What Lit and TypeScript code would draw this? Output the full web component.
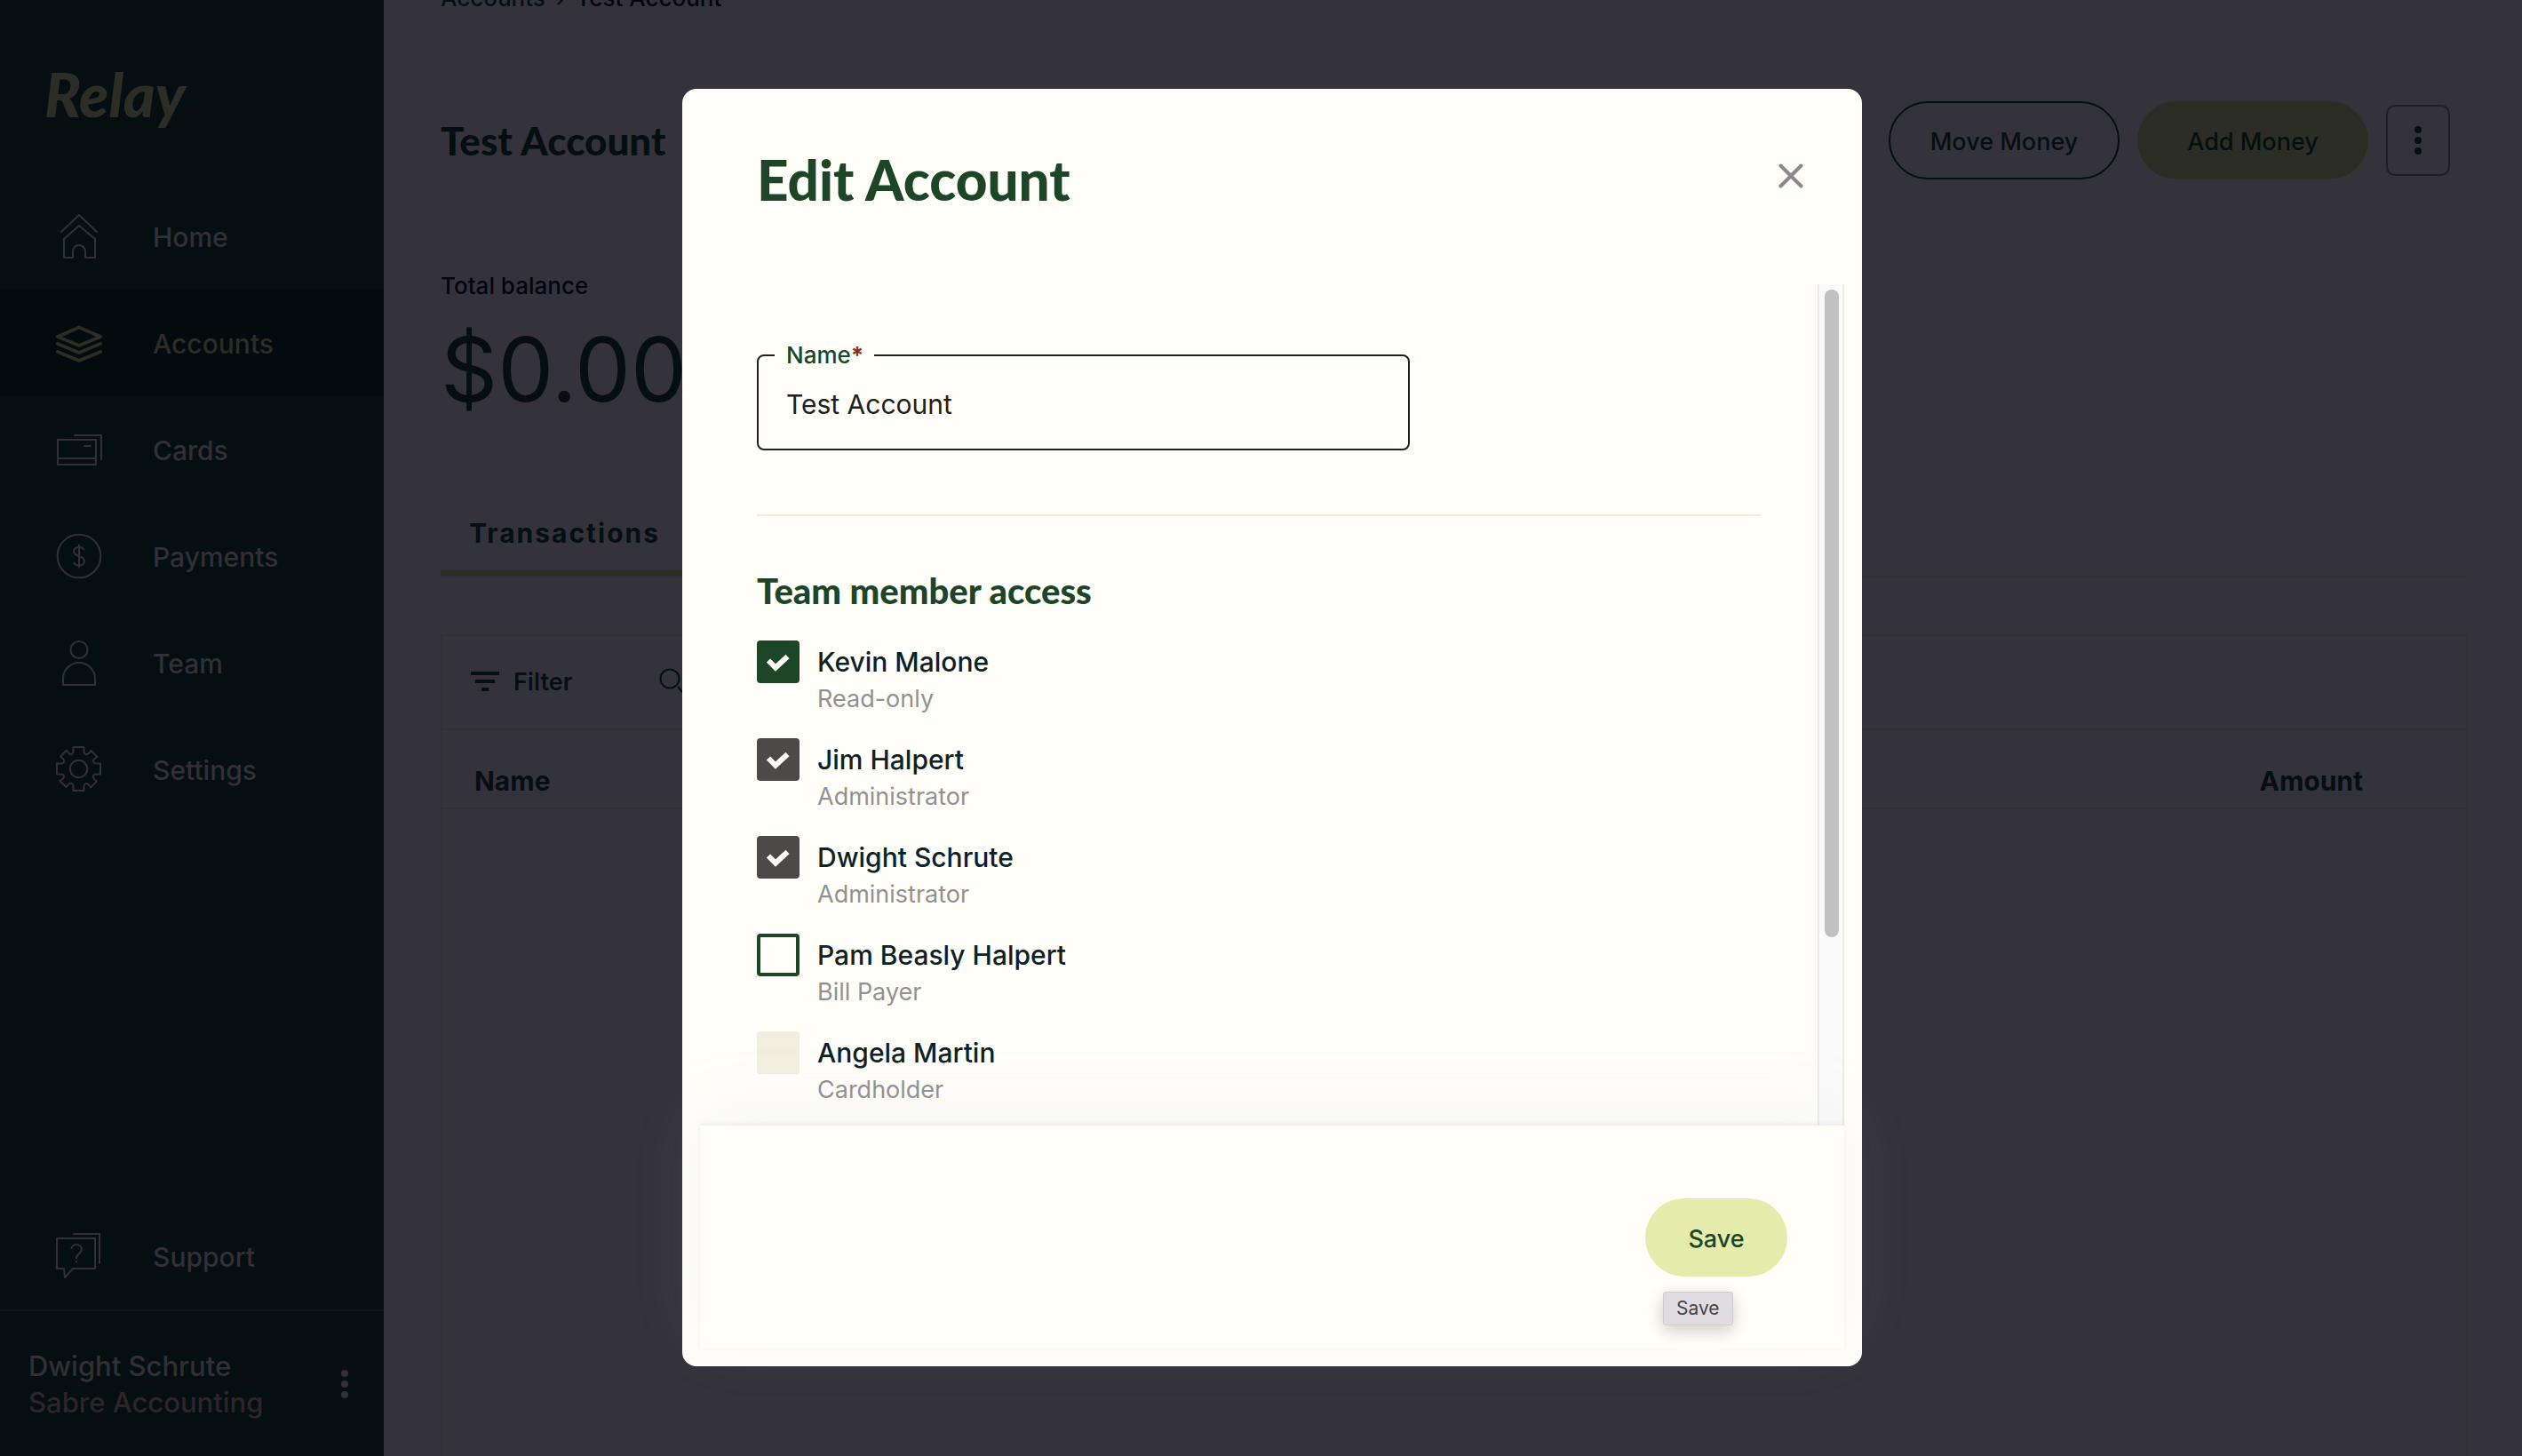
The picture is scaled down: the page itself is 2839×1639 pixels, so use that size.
import { LitElement, html, svg, css, nothing } from "lit";
import { customElement, property, state } from "lit/decorators.js";
import { classMap } from "lit/directives/class-map.js";

const icons: Record<string, unknown> = {
  home: svg`<path d="M8 23 28 4 48 23"/><path d="M11 52V31L28 16 46 31V52H35V45a7 7 0 0 0-14 0V52Z"/>`,
  accounts: svg`<g stroke-width="4"><path d="M4 21 28 10.500 52 21 28 31Z"/><path d="M4 29 28 39 52 29"/><path d="M4 38 28 48 52 38"/></g>`,
  cards: svg`<path d="M4 17H47V45H4ZM4 38H47M34 24H41M23 12H53V39"/>`,
  payments: svg`<circle cx="28" cy="28" r="24.300"/><path d="M28 15.500V40.500M33.500 20.500C32 18.500 30 18 28 18C24 18 22 20 22 22.500C22 26 25 27 28 28C31 29 34 30 34 33.500C34 36.500 31.500 38.500 28 38.500C25.500 38.500 23.500 38 22.500 36"/>`,
  team: svg`<circle cx="28" cy="13.500" r="9.500"/><path d="M10 53V46a18 18 0 0 1 36 0V53Z"/>`,
  settings: svg`<g transform="translate(27.500 27.500)"><circle r="9.700"/><path d="M-6-24.500H6V-19.500C6-16 9.500-15.500 11.500-17.500L14-20.500 21-13.500 17.500-11C15.500-9 16.500-6 19.500-6H24.500V6H19.500C16 6 15.500 9.500 17.500 11.500L20.500 14 13.500 21 11 17.500C9 15.500 6 16.500 6 19.500V24.500H-6V19.500C-6 16-9.500 15.500-11.500 17.500L-14 20.500-21 13.500-17.500 11C-15.500 9-16.500 6-19.500 6H-24.500V-6H-19.500C-16-6-15.500-9.500-17.500-11.500L-20.500-14-13.500-21-11-17.500C-9-15.500-6-16.500-6-19.500Z"/></g>`,
  support: svg`<path d="M3 8H46V42H21L12 52 11 42H3ZM22 3H51V36"/><path d="M19.500 19C20.500 16.500 22.500 15 25 15C28.500 15 31 17.500 31 20.500C31 25 25 25 25 30.500M25 34V34.500"/>`,
};

const dots = html`<svg class="dots" viewBox="0 0 8 32" aria-hidden="true">
  <circle cx="4" cy="4" r="4" /><circle cx="4" cy="16" r="4" /><circle cx="4" cy="28" r="4" />
</svg>`;

const base = css`
  *,
  *::before,
  *::after {
    box-sizing: border-box;
  }
  h1,
  h2,
  p {
    margin: 0;
  }
  button {
    font: inherit;
    margin: 0;
    padding: 0;
    border: 0;
    background: none;
    color: inherit;
    cursor: pointer;
  }
  a {
    color: inherit;
    text-decoration: none;
  }
  .dots {
    display: block;
    width: 8px;
    height: 32px;
    fill: currentColor;
  }
`;

@customElement("side-nav")
export class SideNav extends LitElement {
  @property() current = "accounts";

  static styles = [
    base,
    css`
      :host {
        display: flex;
        flex-direction: column;
        flex: none;
        width: 432px;
        background: #050f12;
        color: #322f36;
        font-size: 30px;
        font-weight: 500;
        line-height: 41px;
      }
      .logo {
        display: block;
        height: 206px;
        padding: 66px 50px 0;
        font-family: Lato, "Liberation Sans", sans-serif;
        font-size: 68px;
        line-height: 80px;
        font-style: italic;
        font-weight: 900;
        color: #2c2e26;
      }
      .item {
        display: flex;
        align-items: center;
        gap: 55px;
        height: 120px;
        padding: 0 61px;
      }
      .item.active {
        background: #040b0e;
        color: #2c2e26;
      }
      .icon {
        flex: none;
        width: 56px;
        height: 56px;
        fill: none;
        stroke: currentColor;
        stroke-width: 2;
        stroke-linecap: round;
        stroke-linejoin: round;
      }
      .label {
        padding-top: 2px;
      }
      .grow {
        flex: 1;
      }
      .profile {
        display: flex;
        align-items: center;
        justify-content: space-between;
        height: 165px;
        padding: 0 40px 0 32px;
        border-top: 2px solid #0e171a;
        font-size: 31px;
      }
      .company {
        color: #2d252b;
      }
    `,
  ];

  private item(id: string, label: string) {
    return html`<a class=${classMap({ item: true, active: id === this.current })} href="#${id}">
      <svg class="icon" viewBox="0 0 56 56" aria-hidden="true">${icons[id]}</svg>
      <span class="label">${label}</span>
    </a>`;
  }

  render() {
    return html`
      <a class="logo" href="#home">Relay</a>
      <nav>
        ${this.item("home", "Home")} ${this.item("accounts", "Accounts")} ${this.item("cards", "Cards")}
        ${this.item("payments", "Payments")} ${this.item("team", "Team")} ${this.item("settings", "Settings")}
      </nav>
      <div class="grow"></div>
      ${this.item("support", "Support")}
      <div class="profile">
        <div>
          <p>Dwight Schrute</p>
          <p class="company">Sabre Accounting</p>
        </div>
        <button aria-label="Profile menu">${dots}</button>
      </div>
    `;
  }
}

@customElement("account-page")
export class AccountPage extends LitElement {
  static styles = [
    base,
    css`
      :host {
        display: flex;
        flex-direction: column;
        flex: 1;
        min-width: 0;
        overflow: hidden;
        padding: 0 61px 0 64px;
        background: #34333c;
        color: #050f12;
      }
      .crumbs {
        display: flex;
        gap: 12px;
        margin-top: -18px;
        font-size: 26px;
        font-weight: 500;
        line-height: 32px;
      }
      .here,
      .caption {
        color: #04040f;
      }
      .top {
        display: flex;
        align-items: center;
        gap: 20px;
        margin-top: 100px;
        padding-right: 20px;
      }
      .title {
        flex: 1;
        font-family: Lato, "Liberation Sans", sans-serif;
        font-size: 44px;
        font-weight: 900;
        line-height: 56px;
      }
      .pill {
        width: 260px;
        height: 88px;
        padding-top: 2px;
        border: 2px solid #050f12;
        border-radius: 44px;
        font-size: 27px;
        font-weight: 500;
      }
      .pill.fill {
        border-color: #2c2e26;
        background: #2c2e26;
      }
      .more {
        display: grid;
        place-items: center;
        width: 72px;
        height: 80px;
        border: 2px solid #1b1f29;
        border-radius: 10px;
      }
      .caption {
        margin-top: 104px;
        font-size: 26px;
        font-weight: 500;
        line-height: 32px;
      }
      .amount {
        margin-top: 18px;
        font-size: 100px;
        line-height: 120px;
      }
      .tabs {
        display: flex;
        margin-top: 104px;
        border-bottom: 2px solid #303133;
      }
      .tab {
        padding: 0 32px 22px;
        border-bottom: 6px solid #2c2e26;
        font-size: 30px;
        font-weight: 700;
        line-height: 40px;
        letter-spacing: 2px;
      }
      .card {
        flex: 1;
        margin-top: 64px;
        border: 2px solid #303133;
        border-bottom: 0;
      }
      .toolbar {
        display: flex;
        align-items: center;
        gap: 98px;
        height: 106px;
        padding: 0 32px;
        border-bottom: 2px solid #303133;
      }
      .filter {
        display: flex;
        align-items: center;
        gap: 16px;
        font-size: 27px;
        font-weight: 600;
        line-height: 32px;
      }
      .bars {
        width: 32px;
        height: 24px;
        fill: currentColor;
      }
      .lens {
        display: block;
        width: 32px;
        height: 32px;
        fill: none;
        stroke: currentColor;
        stroke-width: 2;
      }
      .table {
        width: 100%;
        border-collapse: collapse;
      }
      .th {
        height: 88px;
        padding: 0 36px 10px;
        border-bottom: 2px solid #303133;
        font-size: 30px;
        font-weight: 700;
        line-height: 40px;
        text-align: left;
        vertical-align: bottom;
      }
      .th.num {
        padding-right: 116px;
        text-align: right;
      }
    `,
  ];

  render() {
    return html`
      <nav class="crumbs"><a href="#accounts">Accounts</a><span>›</span><span class="here">Test Account</span></nav>
      <header class="top">
        <h1 class="title">Test Account</h1>
        <button class="pill">Move Money</button>
        <button class="pill fill">Add Money</button>
        <button class="more" aria-label="More actions">${dots}</button>
      </header>
      <p class="caption">Total balance</p>
      <p class="amount">$0.00</p>
      <div class="tabs" role="tablist">
        <button class="tab" role="tab" aria-selected="true">Transactions</button>
      </div>
      <section class="card">
        <div class="toolbar">
          <button class="filter">
            <svg class="bars" viewBox="0 0 32 24" aria-hidden="true">
              <path d="M0 0H32V4H0ZM5 9H27V13H5ZM12 18H20V22H12Z" />
            </svg>
            Filter
          </button>
          <button aria-label="Search">
            <svg class="lens" viewBox="0 0 32 32" aria-hidden="true">
              <circle cx="12" cy="12" r="10.500" />
              <path d="M21 21 29 30" />
            </svg>
          </button>
        </div>
        <table class="table">
          <thead>
            <tr>
              <th class="th" scope="col">Name</th>
              <th class="th num" scope="col">Amount</th>
            </tr>
          </thead>
        </table>
      </section>
    `;
  }
}

interface Member {
  name: string;
  role: string;
  checked: boolean;
  locked: boolean;
}

@customElement("edit-account-dialog")
export class EditAccountDialog extends LitElement {
  @state() private members: Member[] = [
    { name: "Kevin Malone", role: "Read-only", checked: true, locked: false },
    { name: "Jim Halpert", role: "Administrator", checked: true, locked: true },
    { name: "Dwight Schrute", role: "Administrator", checked: true, locked: true },
    { name: "Pam Beasly Halpert", role: "Bill Payer", checked: false, locked: false },
    { name: "Angela Martin", role: "Cardholder", checked: false, locked: true },
  ];

  static styles = [
    base,
    css`
      :host {
        position: fixed;
        inset: 0;
        display: flex;
        justify-content: center;
        padding: 100px 0 101px 25px;
      }
      .dialog {
        display: flex;
        flex-direction: column;
        width: 100%;
        max-width: 1328px;
        padding: 0 20px 20px;
        border-radius: 16px;
        background: #fffef9;
        color: #0d2227;
      }
      .head {
        display: flex;
        justify-content: space-between;
        align-items: flex-start;
        height: 220px;
        padding: 62px 24px 0 64px;
      }
      .title,
      .section {
        font-family: Lato, "Liberation Sans", sans-serif;
        font-weight: 900;
        color: #1d4628;
      }
      .title {
        font-size: 62px;
        line-height: 80px;
      }
      .close {
        display: grid;
        place-items: center;
        width: 72px;
        height: 72px;
      }
      .cross {
        width: 28px;
        height: 28px;
        fill: none;
        stroke: #8a8a8a;
        stroke-width: 4;
        stroke-linecap: round;
      }
      .body {
        display: flex;
        flex: 1;
        min-height: 0;
      }
      .content {
        flex: 1;
        overflow: hidden;
        padding: 64px 64px 0;
      }
      .track {
        width: 30px;
        padding: 6px;
        border: solid #ebebeb;
        border-width: 0 2px;
        background: #fafafa;
      }
      .thumb {
        width: 16px;
        height: 78%;
        border-radius: 8px;
        background: #c1c1c1;
      }
      .field {
        width: 100%;
        max-width: 735px;
        margin: 0;
        padding: 0 18px;
        border: 2px solid #22201f;
        border-radius: 8px;
      }
      .legend {
        padding: 0 12px 0 13px;
        font-size: 26px;
        font-weight: 500;
        line-height: 32px;
        color: #1d4628;
      }
      .star {
        color: #8a3018;
        font-weight: 700;
      }
      .input {
        display: block;
        width: 100%;
        height: 89px;
        padding: 0 13px 11px;
        border: 0;
        outline: 0;
        background: none;
        font: inherit;
        font-size: 30px;
        color: #22201f;
      }
      .rule {
        height: 2px;
        margin: 72px 0 60px;
        border: 0;
        background: #efecdc;
      }
      .section {
        font-size: 40px;
        line-height: 48px;
      }
      .members {
        display: grid;
        gap: 26px;
        margin-top: 32px;
      }
      .member {
        display: flex;
        gap: 20px;
      }
      .box {
        display: grid;
        flex: none;
        width: 48px;
        height: 48px;
      }
      .check,
      .tick {
        grid-area: 1 / 1;
        width: 48px;
        height: 48px;
        margin: 0;
      }
      .check {
        appearance: none;
        border: 4px solid #1d4628;
        border-radius: 4px;
      }
      .check:checked {
        background: #1d4628;
      }
      .check:disabled {
        border-color: #f2eee0;
        background: #f2eee0;
      }
      .check:checked:disabled {
        border-color: #4d4948;
        background: #4d4948;
      }
      .tick {
        fill: none;
        stroke: #fffef9;
        stroke-width: 6;
        pointer-events: none;
      }
      .who {
        display: grid;
        gap: 4px;
        padding-top: 4px;
      }
      .name {
        font-size: 30px;
        font-weight: 500;
        line-height: 40px;
      }
      .role {
        font-size: 27px;
        line-height: 36px;
        color: #919191;
      }
      .foot {
        position: relative;
        display: flex;
        justify-content: flex-end;
        padding: 82px 64px 81px;
        background: #fffef9;
        box-shadow:
          0 -2px 4px rgba(170, 178, 200, 0.16),
          0 -16px 72px rgba(180, 184, 200, 0.13);
      }
      .action {
        position: relative;
      }
      .save {
        width: 160px;
        height: 88px;
        padding-top: 2px;
        border-radius: 44px;
        background: #e4ebab;
        color: #1d4628;
        font-size: 27px;
        font-weight: 500;
      }
      .tip {
        position: absolute;
        top: 105px;
        left: 20px;
        padding: 0 14px;
        border: 1px solid #cfccd0;
        border-radius: 3px;
        background: #e0dde2;
        box-shadow: 0 6px 20px rgba(0, 0, 0, 0.2);
        color: #454545;
        font-size: 21px;
        line-height: 36px;
      }
    `,
  ];

  private toggle(index: number) {
    this.members = this.members.map((m, i) => (i === index ? { ...m, checked: !m.checked } : m));
  }

  render() {
    return html`
      <section class="dialog" role="dialog" aria-modal="true" aria-labelledby="heading">
        <header class="head">
          <h1 class="title" id="heading">Edit Account</h1>
          <button class="close" aria-label="Close">
            <svg class="cross" viewBox="0 0 28 28" aria-hidden="true"><path d="M2.500 2.500 25.500 25.500M25.500 2.500 2.500 25.500" /></svg>
          </button>
        </header>
        <div class="body">
          <div class="content">
            <fieldset class="field">
              <legend class="legend"><label for="name">Name<span class="star">*</span></label></legend>
              <input class="input" id="name" type="text" required .value=${"Test Account"} />
            </fieldset>
            <hr class="rule" />
            <h2 class="section">Team member access</h2>
            <div class="members">
              ${this.members.map(
                (m, i) => html`<label class="member">
                  <span class="box">
                    <input
                      class="check"
                      type="checkbox"
                      .checked=${m.checked}
                      ?disabled=${m.locked}
                      @change=${() => this.toggle(i)}
                    />
                    ${m.checked
                      ? html`<svg class="tick" viewBox="0 0 48 48" aria-hidden="true"><path d="M13 22.500 21 30.500 34.500 18" /></svg>`
                      : nothing}
                  </span>
                  <span class="who"><span class="name">${m.name}</span><span class="role">${m.role}</span></span>
                </label>`
              )}
            </div>
          </div>
          <div class="track" aria-hidden="true"><div class="thumb"></div></div>
        </div>
        <footer class="foot">
          <div class="action">
            <button class="save">Save</button>
            <span class="tip" role="tooltip">Save</span>
          </div>
        </footer>
      </section>
    `;
  }
}

@customElement("app-root")
export class AppRoot extends LitElement {
  static styles = css`
    :host {
      display: flex;
      height: 100vh;
      overflow: hidden;
      font-family: Inter, "Liberation Sans", sans-serif;
    }
  `;

  render() {
    return html`
      <side-nav current="accounts"></side-nav>
      <account-page></account-page>
      <edit-account-dialog></edit-account-dialog>
    `;
  }
}
